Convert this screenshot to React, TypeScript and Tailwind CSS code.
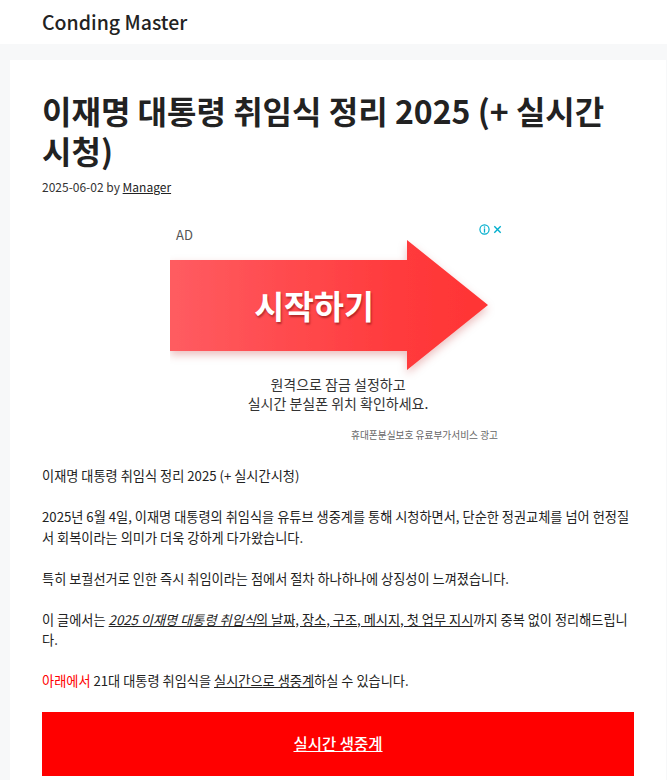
import React from 'react';

const FONT = '"Noto Sans CJK KR", "Noto Sans", sans-serif';

const AdArrow = () => (
  <svg width="336" height="140" viewBox="0 0 336 140" className="block">
    <defs>
      <linearGradient id="arrowFill" x1="0" y1="0" x2="1" y2="0">
        <stop offset="0" stopColor="#ff5c61" />
        <stop offset="0.7" stopColor="#ff3b3d" />
        <stop offset="1" stopColor="#ff3434" />
      </linearGradient>
      <filter id="arrowShadow" x="-10%" y="-10%" width="120%" height="130%">
        <feDropShadow dx="0" dy="4" stdDeviation="4" floodColor="#b00000" floodOpacity="0.25" />
      </filter>
    </defs>
    <path
      d="M0 20 H237 V0 L318 65 L237 130 V111 H0 Z"
      fill="url(#arrowFill)"
      filter="url(#arrowShadow)"
    />
  </svg>
);

const Advert = () => (
  <div className="relative mx-auto mt-[23px] h-[225px] w-[336px] bg-white">
    <span className="absolute left-[6px] top-[7px] text-[13px] leading-[16px] text-[#555]">AD</span>
    <div className="absolute right-[3px] top-[4px] flex items-center gap-[2px] text-[#00aecd]">
      <svg width="11" height="11" viewBox="0 0 12 12">
        <circle cx="6" cy="6" r="5" fill="none" stroke="currentColor" strokeWidth="1.3" />
        <rect x="5.3" y="2.6" width="1.4" height="1.4" fill="currentColor" />
        <rect x="5.3" y="4.8" width="1.4" height="4.6" fill="currentColor" />
      </svg>
      <svg width="11" height="11" viewBox="0 0 12 12">
        <path d="M2.5 2.5 L9.5 9.5 M9.5 2.5 L2.5 9.5" stroke="currentColor" strokeWidth="1.5" />
      </svg>
    </div>
    <div className="pt-[20px]">
      <AdArrow />
    </div>
    <span className="absolute left-[144px] top-[85px] -translate-x-1/2 -translate-y-1/2 whitespace-nowrap text-[32.5px] font-bold leading-none text-white [text-shadow:1px_2px_2px_rgba(90,0,0,0.45)]">
      시작하기
    </span>
    <div className="-mt-[5px] text-center text-[14px] leading-[19px] text-[#333]">
      <p>원격으로 잠금 설정하고</p>
      <p>실시간 분실폰 위치 확인하세요.</p>
    </div>
    <p className="mt-[15px] pr-[8px] text-right text-[9.7px] leading-[14px] text-[#666]">
      휴대폰분실보호 유료부가서비스 광고
    </p>
  </div>
);

export default function App() {
  return (
    <div className="min-h-screen bg-[#f7f8f9] text-[#222]" style={{ fontFamily: FONT }}>
      <header className="flex h-[44px] items-center bg-white px-[42px]">
        <span className="text-[19.5px] font-medium leading-none">Conding Master</span>
      </header>

      <div className="pl-[10px] pr-px pt-4">
        <article className="bg-white px-8 pb-8 pt-[30px]">
          <h1 className="text-[32px] font-bold leading-[40px]">
            이재명 대통령 취임식 정리 2025 (+ 실시간 시청)
          </h1>
          <p className="mt-[7px] text-[12px] leading-[20px] text-[#333]">
            2025-06-02 by <a className="text-[#222] underline">Manager</a>
          </p>

          <Advert />

          <div className="mt-[21px] text-[13.2px] leading-[20.5px]">
            <p className="mb-[20.5px]">이재명 대통령 취임식 정리 2025 (+ 실시간시청)</p>
            <p className="mb-[20.5px]">
              2025년 6월 4일, 이재명 대통령의 취임식을 유튜브 생중계를 통해 시청하면서, 단순한 정권교체를 넘어 헌정질서 회복이라는 의미가 더욱 강하게 다가왔습니다.
            </p>
            <p className="mb-[20.5px]">
              특히 보궐선거로 인한 즉시 취임이라는 점에서 절차 하나하나에 상징성이 느껴졌습니다.
            </p>
            <p className="mb-[20.5px]">
              이 글에서는{' '}
              <span className="underline">
                <em>2025 이재명 대통령 취임식</em>의 날짜, 장소, 구조, 메시지, 첫 업무 지시
              </span>
              까지 중복 없이 정리해드립니다.
            </p>
            <p className="mb-[20px]">
              <span className="text-[#ff0000]">아래에서</span> 21대 대통령 취임식을{' '}
              <span className="underline">실시간으로 생중계</span>하실 수 있습니다.
            </p>
          </div>

          <a className="flex h-[64px] items-center justify-center bg-[#ff0000] text-[15.5px] font-medium text-white underline">
            실시간 생중계
          </a>
        </article>
      </div>
    </div>
  );
}
